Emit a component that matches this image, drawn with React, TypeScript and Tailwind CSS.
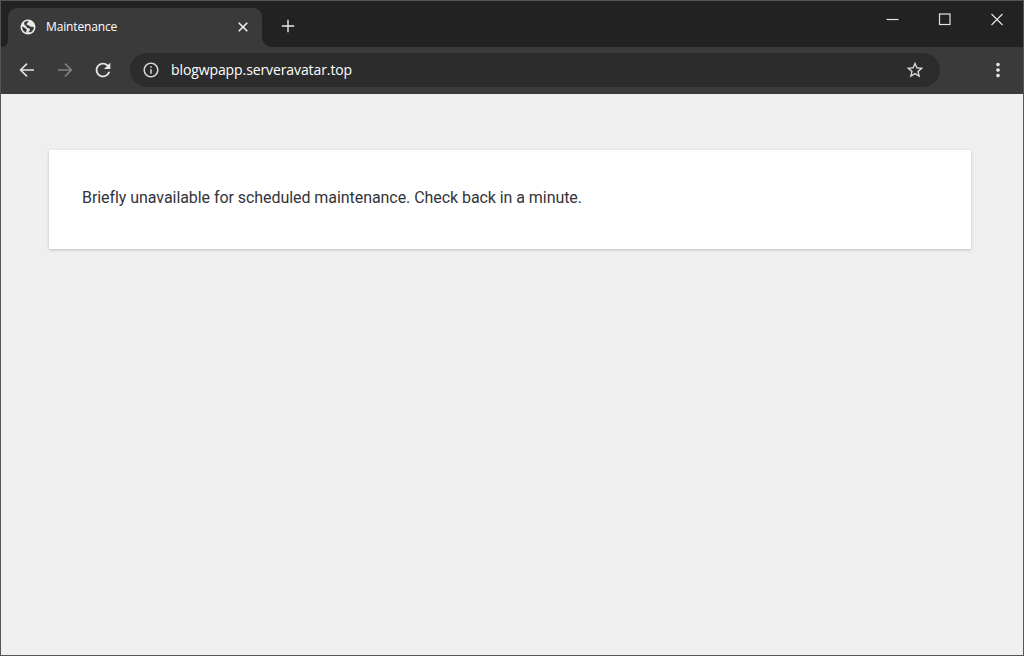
import type { ReactNode } from 'react';
import { MdInfoOutline, MdMoreVert, MdRefresh, MdStarOutline } from 'react-icons/md';

const GlobeIcon = () => (
  <svg className="w-4 h-4 shrink-0" viewBox="0 0 16 16">
    <circle cx="8" cy="8" r="7.5" fill="#e9e9e9" />
    <path d="M4.6 3.1C5.8 2.2 7.2 1.9 8.8 2.1 7.6 3 8 3.9 7 4.600c-.8.600-.4 1.300.600 1.500 1.500.200 1.900 1.500 3.100 1.700 1.200.2 2.500-.1 3.200.4-.1 1.800-1.100 3.500-2.500 4.500-1.200.8-2 .8-2.900.4.2-1 1.600-1.300 1.500-2.400-.1-.9-1-1.400-2-1.600C6.600 8.800 6.700 7.300 5.600 6.700 4.400 6 3.400 4.600 4.600 3.100z" fill="#383838" />
    <path d="M2 7.600c1.200.2 2 .7 2.900 1.500.8.8 2 .9 1.900 1.900-.1.8-.8 1.200-.5 2.700C3.800 12.900 2 10.600 2 7.600z" fill="#383838" />
  </svg>
);

const Tab = ({ title }: { title: string }) => (
  <div className="flex items-end h-full">
    {/* Flared corners that join the tab to the toolbar */}
    <svg className="w-[7px] h-2" viewBox="0 0 7 8">
      <path d="M7 0v8H0c5 0 7-3.5 7-8z" fill="#3a3a3a" />
    </svg>
    <div className="flex items-center w-[254px] h-[39px] pl-3 pr-3 pb-0.5 rounded-t-[9px] bg-[#3a3a3a]">
      <GlobeIcon />
      <span className="flex-1 ml-2.5 text-[12px] leading-4 tracking-[-0.15px] text-white">{title}</span>
      <svg className="w-3.5 h-3.5 mt-px" viewBox="0 0 14 14" fill="none" stroke="#eeeeee" strokeWidth="1.6">
        <path d="M2.7 2.7l8.6 8.6M11.3 2.7l-8.6 8.600" />
      </svg>
    </div>
    <svg className="w-[11px] h-[11px]" viewBox="0 0 11 11">
      <path d="M0 0v11h11C4 11 0 7 0 0z" fill="#3a3a3a" />
    </svg>
  </div>
);

const WindowButton = ({ children }: { children: ReactNode }) => (
  <button className="flex items-center justify-center w-[52px] h-9">
    <svg className="w-3.5 h-3.5" viewBox="0 0 14 14" fill="none" stroke="#e2e2e2" strokeWidth="1.2">
      {children}
    </svg>
  </button>
);

const TitleBar = () => (
  <div className="flex h-[46px] bg-[#222222]">
    <Tab title="Maintenance" />
    <button className="flex items-center w-8 h-full pl-2 pt-1">
      <svg className="w-3.5 h-3.5" viewBox="0 0 14 14" fill="none" stroke="#e8e8e8" strokeWidth="1.4">
        <path d="M7 .8v12.4M.8 7h12.4" />
      </svg>
    </button>
    <div className="flex ml-auto">
      <WindowButton>
        <path d="M.5 7.5h12" />
      </WindowButton>
      <WindowButton>
        <rect x="1.5" y="2" width="10.500" height="10.500" />
      </WindowButton>
      <WindowButton>
        <path d="M1.5 2l11 11M12.5 2l-11 11" />
      </WindowButton>
    </div>
  </div>
);

const BackIcon = ({ className }: { className?: string }) => (
  <svg className={className} viewBox="0 0 22 22" fill="none" stroke="currentColor" strokeWidth="1.6">
    <path d="M18 11H4.8M11 4.600L4.600 11l6.400 6.400" />
  </svg>
);

const Toolbar = ({ url }: { url: string }) => (
  <div className="flex items-center h-[47px] pl-[15px] pr-3.5 pb-px bg-[#3a3a3a]">
    <div className="flex items-center gap-4 text-[22px] text-[#e6e6e6]">
      <BackIcon className="w-[22px] h-[22px]" />
      <BackIcon className="w-[22px] h-[22px] rotate-180 text-[#838383]" />
      <MdRefresh />
    </div>
    <div className="flex items-center w-[810px] h-[34px] ml-4 pl-3 pr-[15px] rounded-full bg-[#2c2c2c]">
      <MdInfoOutline className="text-[18px] text-[#d8d8d8]" />
      <span className="flex-1 ml-[11px] text-[14px] leading-5 tracking-[-0.1px] text-white">{url}</span>
      <MdStarOutline className="text-[20px] text-[#dcdcdc]" />
    </div>
    <MdMoreVert className="ml-auto text-[22px] text-[#e6e6e6]" />
  </div>
);

const App = () => {
  return (
    <div className="flex flex-col h-screen border border-[#555555] bg-[#efefef] font-['Open_Sans','Noto_Sans',sans-serif]">
      <TitleBar />
      <Toolbar url="blogwpapp.serveravatar.top" />
      <main className="flex-1 pl-12 pt-14 pr-[52px]">
        <div className="h-[99px] px-[33px] pt-9 bg-white shadow-[0_1px_3px_rgba(0,0,0,0.2)] font-['Roboto',sans-serif]">
          <p className="text-[16px] leading-6 tracking-[-0.06px] text-[#33343a]">
            Briefly unavailable for scheduled maintenance. Check back in a minute.
          </p>
        </div>
      </main>
    </div>
  );
};

export default App;
